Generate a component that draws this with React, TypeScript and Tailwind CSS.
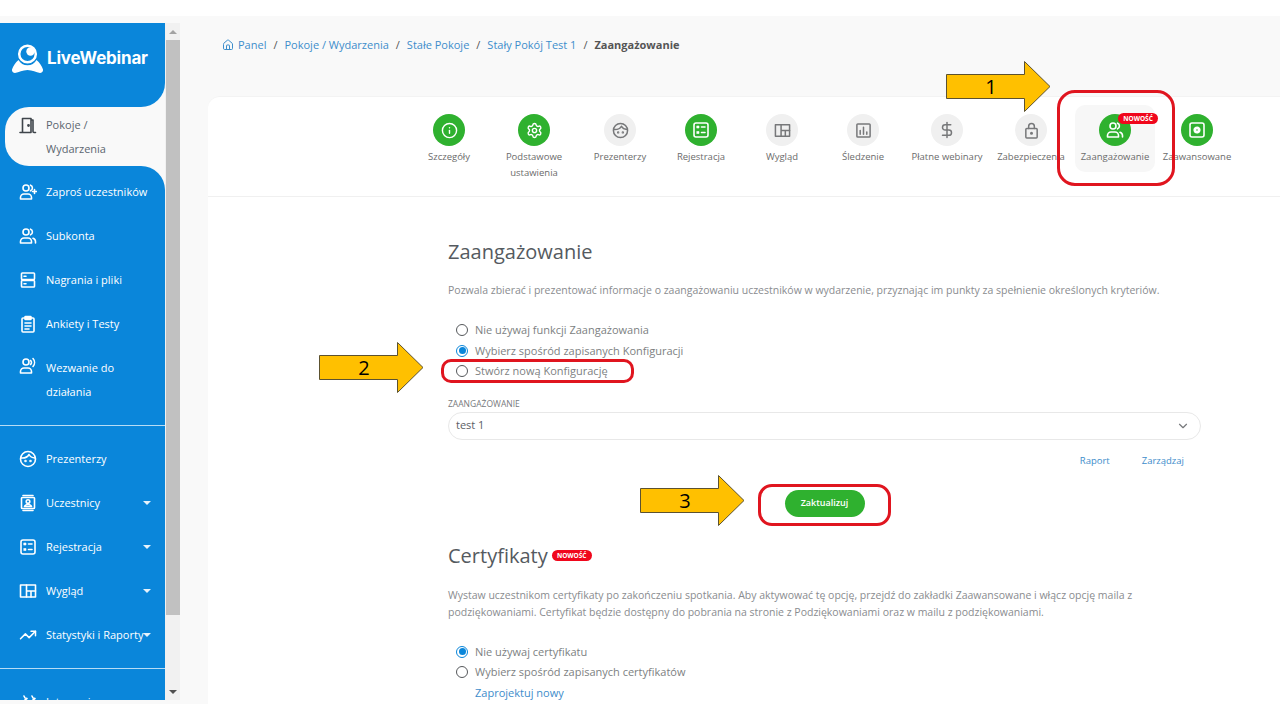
import { Home, ChevronDown, Info, Settings, TrendingUp, DollarSign } from 'lucide-react';
import type { ReactNode } from 'react';

const Svg = ({ size = 18, children }: { size?: number; children: ReactNode }) => (
    <svg width={size} height={size} viewBox="0 0 18 18" fill="none" stroke="currentColor" strokeWidth="1.6" strokeLinecap="round" strokeLinejoin="round">
        {children}
    </svg>
);

const DoorIcon = () => (
    <Svg>
        <path d="M1 16.500h2.500M3.500 16.500V2.500h8.500v14h-8.500M12 4h2v11.500c0 .7.500 1 1 1h1.500" />
        <circle cx="9.500" cy="9.500" r=".6" fill="currentColor" />
    </Svg>
);
const Person = () => (
    <>
        <circle cx="7" cy="5" r="3" />
        <path d="M1.500 16v-1.500A3.500 3.500 0 0 1 5 11h4a3.500 3.500 0 0 1 3.500 3.500V16z" />
    </>
);
const InviteIcon = () => (
    <Svg><Person /><path d="M11.500 2.200a3 3 0 0 1 0 5.600M15.500 6.500v4M13.500 8.500h4" /></Svg>
);
const TeamIcon = ({ size }: { size?: number }) => (
    <Svg size={size}><Person /><path d="M11.500 2.200a3 3 0 0 1 0 5.600M14 11.300a3.500 3.500 0 0 1 2.500 3.200V16" /></Svg>
);
const CallIcon = () => (
    <Svg><Person /><path d="M11.500 3.500a2.500 2.500 0 0 1 0 4M14 1.500a6 6 0 0 1 0 8" /></Svg>
);
const ServerIcon = () => (
    <Svg>
        <rect x="2.500" y="2" width="13" height="6.500" rx=".8" />
        <rect x="2.500" y="9.500" width="13" height="6.500" rx=".8" />
        <path d="M5 5.200h2M5 12.700h2" />
    </Svg>
);
const ClipboardIcon = () => (
    <Svg>
        <rect x="3" y="3" width="12" height="14" rx="1" />
        <rect x="6" y="1.500" width="6" height="3" rx=".5" fill="currentColor" />
        <path d="M6 8h6M6 11h6M6 14h4" />
    </Svg>
);
const FaceIcon = ({ size }: { size?: number }) => (
    <Svg size={size}>
        <circle cx="9" cy="9" r="7.500" />
        <path d="M2 8c3.500.3 6.500-.8 8-3.500 1 2 3 3.300 6 3.500" />
        <circle cx="6.500" cy="11" r=".5" fill="currentColor" />
        <circle cx="11.500" cy="11" r=".5" fill="currentColor" />
    </Svg>
);
const ContactIcon = () => (
    <Svg>
        <path d="M4 1.500h10M4 16.500h10" />
        <rect x="2.500" y="3.500" width="13" height="11" rx=".8" />
        <circle cx="9" cy="7.500" r="1.800" />
        <path d="M5.500 12.500c.5-1.500 2-2 3.500-2s3 .5 3.500 2z" />
    </Svg>
);
const ListBoxIcon = ({ size }: { size?: number }) => (
    <Svg size={size}>
        <rect x="2" y="2" width="14" height="14" rx="2" />
        <rect x="5" y="5" width="2" height="2" fill="currentColor" strokeWidth=".6" />
        <rect x="5" y="10.500" width="2" height="2" fill="currentColor" strokeWidth=".6" />
        <path d="M9.500 6h3.500M9.500 11.500h3.500" />
    </Svg>
);
const LayoutIcon = ({ size }: { size?: number }) => (
    <Svg size={size}>
        <rect x="1.500" y="3" width="15" height="12" />
        <path d="M7.500 3v12M7.500 9h9M12 9v6" />
    </Svg>
);
const ChartIcon = ({ size }: { size?: number }) => (
    <Svg size={size}>
        <rect x="2" y="2" width="14" height="14" rx="1" />
        <path d="M5.500 13V9M9 13V5.500M12.500 13v-2.500" />
    </Svg>
);
const LockIcon = ({ size }: { size?: number }) => (
    <Svg size={size}>
        <rect x="3" y="7" width="12" height="10" rx="1" />
        <path d="M6 7V4.500a3 3 0 0 1 6 0V7" />
        <circle cx="9" cy="12" r=".8" fill="currentColor" />
    </Svg>
);
const GearBoxIcon = ({ size }: { size?: number }) => (
    <Svg size={size}>
        <rect x="2" y="2" width="14" height="14" rx="2" />
        <circle cx="9" cy="9" r="2.800" fill="currentColor" strokeDasharray="2 .8" />
        <circle cx="9" cy="9" r=".8" fill="#2fb12f" stroke="none" />
    </Svg>
);
const StarsIcon = () => (
    <Svg><path d="M5 3l1 2 2 .5-2 1.500M13 3l1 2 2 .5-2 1.500" /></Svg>
);

const Logo = () => (
    <svg width="32" height="30" viewBox="0 0 32 30" className="shrink-0">
        <circle cx="15.500" cy="10" r="8.300" fill="none" stroke="#fff" strokeWidth="2.500" />
        <circle cx="18.500" cy="7.500" r="4.200" fill="#fff" />
        <path d="M6.500 16c2 3.500 5 5.300 9 5.300s7-1.800 9-5.300c3 2.500 5.500 6 6.500 9.500.3 2-1 3.500-3 3.500-4-.5-7.500-3-12.500-3s-8.500 2.500-12.500 3c-2 0-3.300-1.500-3-3.500 1-3.500 3.500-7 6.500-9.500z" fill="#fff" />
    </svg>
);

const Caret = () => <span className="ml-auto mr-[14px] w-0 h-0 border-x-[4px] border-x-transparent border-t-[4px] border-t-[#e6f2fb]" />;

const NavItem = ({ icon, label, caret }: { icon: ReactNode; label: ReactNode; caret?: boolean }) => (
    <div className="flex items-center h-[44px] shrink-0 pl-[19px] text-white text-[11px]">
        <span className="w-[18px] h-[18px] mr-[9px] shrink-0 flex items-center justify-center">{icon}</span>
        <span className="whitespace-nowrap">{label}</span>
        {caret && <Caret />}
    </div>
);

const Sidebar = () => (
    <aside className="w-[165px] shrink-0 h-full bg-[#f9f9f9] overflow-hidden flex flex-col">
        <div className="h-[84px] shrink-0 bg-[#0a86da] rounded-br-[24px] flex items-start pl-[12px] pt-[21px] gap-[3px]">
            <Logo />
            <span className="text-white font-bold text-[17px] leading-[28px] font-['Inter',sans-serif] tracking-[-0.2px]">LiveWebinar</span>
        </div>
        <div className="bg-[#0a86da] shrink-0">
            <div className="ml-[5px] h-[59px] bg-[#f9f9f9] rounded-l-[24px] flex items-start pl-[14px] pt-[6px] text-[#5c6670] text-[11px] leading-[24px]">
                <span className="mr-[9px] mt-[3px] text-[#3f454b] shrink-0"><DoorIcon /></span>
                <span>Pokoje /<br />Wydarzenia</span>
            </div>
        </div>
        <div className="flex-1 min-h-0 bg-[#0a86da] rounded-tr-[24px] flex flex-col pt-[4px]">
            <NavItem icon={<InviteIcon />} label="Zaproś uczestników" />
            <NavItem icon={<TeamIcon />} label="Subkonta" />
            <NavItem icon={<ServerIcon />} label="Nagrania i pliki" />
            <NavItem icon={<ClipboardIcon />} label="Ankiety i Testy" />
            <div className="flex items-start shrink-0 pl-[19px] text-white text-[11px] leading-[24px] pt-[10px] h-[79px]">
                <span className="mr-[9px] mt-[1px] shrink-0"><CallIcon /></span>
                <span>Wezwanie do<br />działania</span>
            </div>
            <div className="h-px bg-[#b7dcf5] shrink-0" />
            <div className="h-[11px] shrink-0" />
            <NavItem icon={<FaceIcon />} label="Prezenterzy" />
            <NavItem icon={<ContactIcon />} label="Uczestnicy" caret />
            <NavItem icon={<ListBoxIcon />} label="Rejestracja" caret />
            <NavItem icon={<LayoutIcon />} label="Wygląd" caret />
            <div className="flex items-center h-[44px] shrink-0 pl-[19px] text-white text-[11px]">
                <span className="w-[18px] h-[18px] mr-[9px] shrink-0 flex items-center justify-center"><TrendingUp size={18} strokeWidth={2} /></span>
                <span className="whitespace-nowrap">Statystyki i Raporty</span>
                <span className="w-0 h-0 border-x-[4px] border-x-transparent border-t-[4px] border-t-[#e6f2fb]" />
            </div>
            <div className="h-[11px] shrink-0" />
            <div className="h-px bg-[#b7dcf5] shrink-0" />
            <div className="h-[11px] shrink-0" />
            <NavItem icon={<StarsIcon />} label="Integracje" />
        </div>
    </aside>
);

const Scrollbar = () => (
    <div className="w-[15px] shrink-0 h-full bg-[#f1f1f1] flex flex-col items-center">
        <div className="h-[17px] flex items-center justify-center shrink-0">
            <span className="w-0 h-0 border-x-[4px] border-x-transparent border-b-[4px] border-b-[#a3a3a3]" />
        </div>
        <div className="w-[14px] h-[575px] bg-[#c1c1c1] shrink-0" />
        <div className="mt-auto h-[17px] flex items-center justify-center shrink-0">
            <span className="w-0 h-0 border-x-[4px] border-x-transparent border-t-[4px] border-t-[#505050]" />
        </div>
    </div>
);

const Step = ({ icon, label, active, w }: { icon: ReactNode; label: ReactNode; active?: boolean; w: string }) => (
    <div className={`${w} shrink-0 flex flex-col items-center text-center text-[9.5px] leading-[16px] text-[#6b6b6b]`}>
        <span className={`w-[32px] h-[32px] rounded-full flex items-center justify-center ${active ? 'bg-[#2fb12f] text-white' : 'bg-[#f0f0f0] text-[#77787a]'}`}>{icon}</span>
        <span className="mt-[3px] whitespace-nowrap">{label}</span>
    </div>
);

const Radio = ({ checked, label }: { checked?: boolean; label: string }) => (
    <div className="flex items-center h-[20.5px] text-[11px] text-[#7d7f82]">
        <span className={`w-[12px] h-[12px] rounded-full border-[1.5px] mr-[7px] shrink-0 flex items-center justify-center ${checked ? 'border-[#0a86da]' : 'border-[#55585b]'}`}>
            {checked && <span className="w-[7px] h-[7px] rounded-full bg-[#0a86da]" />}
        </span>
        {label}
    </div>
);

const Badge = ({ className = '' }: { className?: string }) => (
    <span className={`w-[40px] text-center bg-[#f0071c] text-white text-[6.5px] font-bold leading-[11px] h-[11px] rounded-full ${className}`}>NOWOŚĆ</span>
);

const Arrow = ({ n, className }: { n: string; className: string }) => (
    <div className={`absolute w-[105px] h-[51px] ${className}`}>
        <svg width="105" height="51" viewBox="0 0 105 51" className="absolute inset-0">
            <path d="M0.500 13.500H78.500V0.500L104 25.500L78.500 50.500V37.500H0.500Z" fill="#ffc000" stroke="#5c5230" strokeWidth="1" />
        </svg>
        <span className="absolute left-0 w-[90px] top-0 text-center text-[20px] leading-[51px] text-black">{n}</span>
    </div>
);

const Breadcrumbs = () => (
    <div className="flex items-center h-[20px] text-[11px] text-[#3d8dcb] gap-[6px]">
        <Home size={12} className="mr-[-2px]" />
        <span>Panel</span>
        <span className="text-[#555] mx-[1px]">/</span>
        <span>Pokoje / Wydarzenia</span>
        <span className="text-[#555] mx-[1px]">/</span>
        <span>Stałe Pokoje</span>
        <span className="text-[#555] mx-[1px]">/</span>
        <span>Stały Pokój Test 1</span>
        <span className="text-[#555] mx-[1px]">/</span>
        <span className="font-bold text-[#555]">Zaangażowanie</span>
    </div>
);

const Tabs = () => (
    <div className="h-[100px] border-b border-[#f0f0f0] flex justify-start pl-[205px] pt-[17px]">
        <Step w="w-[72px]" active icon={<Info size={17} strokeWidth={2} />} label="Szczegóły" />
        <Step w="w-[98px]" active icon={<Settings size={17} strokeWidth={2} />} label={<>Podstawowe<br />ustawienia</>} />
        <Step w="w-[74px]" icon={<FaceIcon size={17} />} label="Prezenterzy" />
        <Step w="w-[88px]" active icon={<ListBoxIcon size={18} />} label="Rejestracja" />
        <Step w="w-[74px]" icon={<LayoutIcon size={17} />} label="Wygląd" />
        <Step w="w-[88px]" icon={<ChartIcon size={17} />} label="Śledzenie" />
        <Step w="w-[80px]" icon={<DollarSign size={18} strokeWidth={2} />} label="Płatne webinary" />
        <Step w="w-[88px]" icon={<LockIcon size={17} />} label="Zabezpieczenia" />
        <div className="w-[80px] h-[67px] -mt-[9px] pt-[9px] bg-[#f7f7f7] rounded-[10px] shrink-0 relative">
            <Step w="w-[80px]" active icon={<TeamIcon size={18} />} label="Zaangażowanie" />
            <Badge className="absolute left-[43px] top-[8px]" />
        </div>
        <Step w="w-[84px]" active icon={<GearBoxIcon size={18} />} label="Zaawansowane" />
    </div>
);

const Content = () => (
    <div className="pl-[240px] pr-[79px] pt-[41px]">
        <h2 className="text-[20px] leading-[28px] text-[#555a60]">Zaangażowanie</h2>
        <p className="mt-[16px] text-[10.500px] leading-[17px] text-[#8a8c8f]">Pozwala zbierać i prezentować informacje o zaangażowaniu uczestników w wydarzenie, przyznając im punkty za spełnienie określonych kryteriów.</p>
        <div className="mt-[21px] pl-[8px]">
            <Radio label="Nie używaj funkcji Zaangażowania" />
            <Radio checked label="Wybierz spośród zapisanych Konfiguracji" />
            <Radio label="Stwórz nową Konfigurację" />
        </div>
        <div className="mt-[16px] text-[8.500px] leading-[12px] text-[#77797c]">ZAANGAŻOWANIE</div>
        <div className="mt-[2px] h-[28px] border border-[#e8e8e8] rounded-[14px] flex items-center pl-[7px] pr-[10px] text-[11px] text-[#5c6066]">
            test 1
            <ChevronDown size={14} className="ml-auto text-[#77797c]" />
        </div>
        <div className="flex justify-end gap-[32px] mt-[13px] pr-[17px] text-[9.500px] leading-[16px] text-[#3d8dcb]">
            <span>Raport</span>
            <span>Zarządzaj</span>
        </div>
        <div className="flex justify-center mt-[21px]">
            <button className="w-[80px] h-[27px] rounded-full bg-[#2fb12f] text-white text-[9px] font-semibold">Zaktualizuj</button>
        </div>
        <div className="flex items-start mt-[25px]">
            <h2 className="text-[20px] leading-[28px] text-[#555a60]">Certyfikaty</h2>
            <Badge className="ml-[4px] mt-[8px]" />
        </div>
        <p className="mt-[17px] text-[10.500px] leading-[17px] text-[#8a8c8f] w-[700px]">Wystaw uczestnikom certyfikaty po zakończeniu spotkania. Aby aktywować tę opcję, przejdź do zakładki Zaawansowane i włącz opcję maila z podziękowaniami. Certyfikat będzie dostępny do pobrania na stronie z Podziękowaniami oraz w mailu z podziękowaniami.</p>
        <div className="mt-[21px] pl-[8px]">
            <Radio checked label="Nie używaj certyfikatu" />
            <Radio label="Wybierz spośród zapisanych certyfikatów" />
            <div className="pl-[19px] text-[11px] leading-[20px] text-[#3d8dcb]">Zaprojektuj nowy</div>
        </div>
    </div>
);

export default function App() {
    return (
        <div className="relative w-[1280px] h-[720px] bg-white overflow-hidden font-['Open_Sans',sans-serif]">
            <div className="h-[16px]" />
            <div className="h-[688px] bg-[#f9f9f9] overflow-hidden">
                <div className="flex h-[684px] pt-[7px]">
                    <Sidebar />
                    <Scrollbar />
                    <main className="flex-1 min-w-0 pl-[28px]">
                        <div className="pl-[14px] pt-[12px] h-[73px]">
                            <Breadcrumbs />
                        </div>
                        <div className="bg-white rounded-tl-[12px] h-[620px] overflow-hidden border-t border-[#f3f3f3]">
                            <Tabs />
                            <Content />
                        </div>
                    </main>
                </div>
            </div>
            <Arrow n="1" className="left-[946px] top-[61px]" />
            <Arrow n="2" className="left-[319px] top-[342px]" />
            <Arrow n="3" className="left-[640px] top-[475px]" />
            <div className="absolute left-[1057px] top-[90px] w-[118px] h-[96px] border-[3px] border-[#e0151f] rounded-[18px]" />
            <div className="absolute left-[441px] top-[359px] w-[193px] h-[24px] border-[3px] border-[#e0151f] rounded-[10px]" />
            <div className="absolute left-[758px] top-[484px] w-[133px] h-[42px] border-[3px] border-[#e0151f] rounded-[14px]" />
        </div>
    );
}
